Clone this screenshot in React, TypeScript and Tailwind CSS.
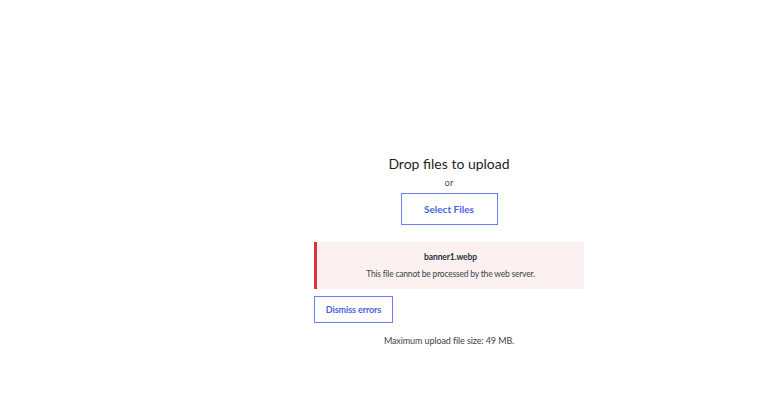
import React from "react";

const font = { fontFamily: 'Lato, "Noto Sans", sans-serif' };

export default function App() {
  return (
    <div className="h-[419px] w-[768px] bg-white text-[#2c3338]" style={font}>
      <div className="flex flex-col items-center pl-[130px] pt-[154px]">
        <h2 className="text-[14px] leading-[20px] font-normal text-[#1d2327]">Drop files to upload</h2>
        <p className="mt-[2px] text-[9.5px] leading-[14px] text-[#50575e]">or</p>
        <button className="mt-[3px] h-[32px] w-[97px] border border-[#6f7ff2] bg-white text-[10px] font-bold text-[#4d5fe0]">
          Select Files
        </button>

        <div className="mt-[17px] flex w-[270px] flex-col">
          {/* upload error notice */}
          <div className="flex h-[47px] flex-col items-center justify-center border-l-[3px] border-[#d63638] bg-[#fcf0f1]">
            <p className="text-[8.5px] leading-[13px] font-bold tracking-[-0.1px] text-[#2c3338]">banner1.webp</p>
            <p className="mt-[4px] text-[8.5px] leading-[13px] tracking-[-0.2px] text-[#3c434a]">
              This file cannot be processed by the web server.
            </p>
          </div>
          <button className="mt-[7px] h-[27px] w-[79px] self-start border border-[#6f7ff2] bg-white text-[9px] font-bold tracking-[-0.1px] text-[#4d5fe0]">
            Dismiss errors
          </button>
        </div>

        <p className="mt-[11px] text-[9px] leading-[14px] tracking-[-0.1px] text-[#3c434a]">Maximum upload file size: 49 MB.</p>
      </div>
    </div>
  );
}
